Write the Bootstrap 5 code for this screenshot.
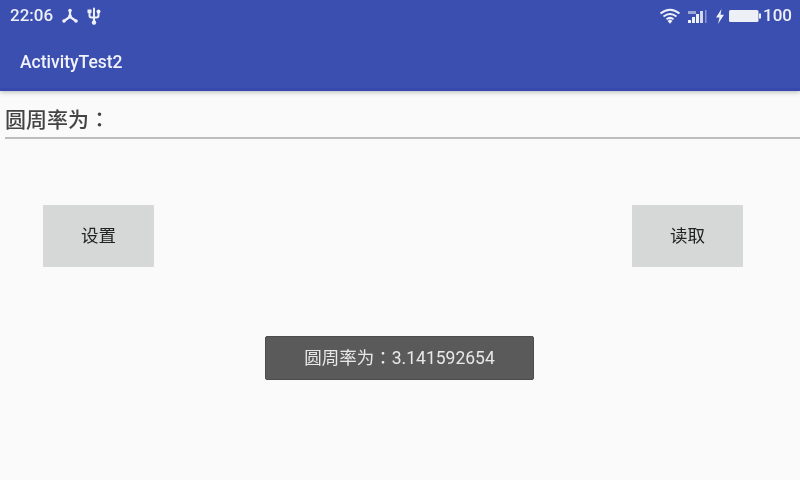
<!DOCTYPE html>
<html lang="en">
<head>
    <meta charset="UTF-8">
    <meta name="viewport" content="width=device-width, initial-scale=1">
    <title>ActivityTest2</title>
    <link href="https://cdn.jsdelivr.net/npm/bootstrap@5.3.0/dist/css/bootstrap.min.css" rel="stylesheet">
    <style>
        html, body { width: 800px; height: 480px; overflow: hidden; }
        html { background: #fafafa; }
        body {
            background: #fafafa;
            font-family: "Roboto", "Noto Sans CJK SC", sans-serif;
            position: relative;
            filter: blur(.5px);
        }
        .app-head { background: #3b4fb1; height: 91px; color: #eef0f8; box-shadow: 0 1px 5px rgba(0,0,0,.28); border-bottom: 3px solid #3648ab; }
        .status-row { height: 32px; padding: 0 8px 0 10px; font-size: 17px; font-weight: 500; }
        .status-row svg { display: block; }
        .gap-wifi { margin-left: 7px; }
        .gap-bolt { margin-left: 5px; }
        .gap-batt { margin-left: 4px; }
        .gap-tight { margin-left: 2px; }
        .title-row { height: 56px; padding: 4px 0 0 20px; font-size: 17.5px; font-weight: 500; color: #f1f2fa; }
        .field-row {
            margin: 0 0 0 5px;
            height: 48px;
            padding-top: 13px;
            border-bottom: 2px solid #bdbdbd;
            font-size: 21px;
            line-height: 28px;
            font-weight: 500;
            color: #444;
        }
        .colon-mark { font-family: "Noto Sans CJK TC", sans-serif; }
        .btn-row { padding: 66px 57px 0 43px; }
        .flat-btn {
            width: 111px;
            height: 62px;
            background: #d6d7d7;
            color: #222;
            font-size: 17.5px;
            border: 0;
            border-radius: 1px;
            padding: 0;
        }
        .toast-box {
            position: absolute;
            left: 265px;
            top: 336px;
            width: 269px;
            height: 44px;
            background: #5a5a5a;
            color: #e8e8e8;
            font-size: 17.5px;
            border-radius: 2px;
            border: 1px solid #4c4c4c;
        }
    </style>
</head>
<body>
<div class="app-head">
    <div class="status-row d-flex align-items-center">
        <span>22:06</span>
        <svg class="ms-2" width="18" height="16" viewBox="0 0 18 16" fill="none" stroke="#eef0f8" stroke-width="2.200" stroke-linecap="round">
            <circle cx="9" cy="8.500" r="2" fill="#eef0f8" stroke="none"/>
            <path d="M9 2.500V8M8 9.500 3 13M10 9.500l5 3.500"/>
            <circle cx="3" cy="13" r="1.800" fill="#eef0f8" stroke="none"/>
            <circle cx="15" cy="13" r="1.800" fill="#eef0f8" stroke="none"/>
            <circle cx="9" cy="2.500" r="1.800" fill="#eef0f8" stroke="none"/>
        </svg>
        <svg class="ms-2" width="14" height="18" viewBox="0 0 14 18" fill="none" stroke="#eef0f8" stroke-width="2" stroke-linecap="round">
            <path d="M7 1.500V16.500M2.500 5v3.500q0 2 2 2H9.500q2 0 2-2V5"/>
            <circle cx="7" cy="15.500" r="2.200" fill="#eef0f8" stroke="none"/>
            <rect x="0.500" y="2.500" width="4" height="3.500" fill="#eef0f8" stroke="none"/>
            <circle cx="11.500" cy="4.500" r="2" fill="#eef0f8" stroke="none"/>
        </svg>
        <div class="ms-auto d-flex align-items-center">
            <svg width="22" height="16" viewBox="0 0 22 16" fill="none" stroke="#eef0f8" stroke-width="2">
                <path d="M1.500 5.500Q11-2 20.500 5.500M4.500 8.500Q11 3.500 17.500 8.500M7.500 11.300Q11 8.500 14.500 11.300"/>
                <path d="M8.500 13 11 11.300 13.500 13 11 15.800Z" fill="#eef0f8" stroke="none"/>
            </svg>
            <svg class="gap-wifi" width="22" height="15" viewBox="0 0 22 15" fill="#eef0f8">
                <rect x="0" y="11" width="3" height="3"/>
                <rect x="4" y="8" width="3" height="6"/>
                <rect x="8" y="5" width="3" height="9"/>
                <rect x="12" y="2" width="3" height="12" opacity=".85"/>
                <rect x="17" y="1" width="1.500" height="13" opacity=".45"/>
                <rect x="0" y="2" width="8" height="3" opacity=".55"/>
            </svg>
            <svg class="gap-bolt" width="10" height="15" viewBox="0 0 10 15" fill="#eef0f8">
                <path d="M6.500 0 1 8.500H4.500L3 15 9 5.800H5.500Z"/>
            </svg>
            <svg class="gap-batt" width="32" height="14" viewBox="0 0 32 14" fill="#eef0f8">
                <rect x="0" y="1" width="29.500" height="12" rx="1.500"/>
                <rect x="30" y="4.500" width="2" height="5"/>
            </svg>
            <span class="gap-tight">100</span>
        </div>
    </div>
    <div class="title-row d-flex align-items-center">ActivityTest2</div>
</div>
<div class="field-row">圆周率为<span class="colon-mark">&#xFF1A;</span></div>
<div class="btn-row d-flex justify-content-between">
    <button class="flat-btn" type="button">设置</button>
    <button class="flat-btn" type="button">读取</button>
</div>
<div class="toast-box d-flex align-items-center justify-content-center"><span>圆周率为<span class="colon-mark">&#xFF1A;</span>3.141592654</span></div>
</body>
</html>
